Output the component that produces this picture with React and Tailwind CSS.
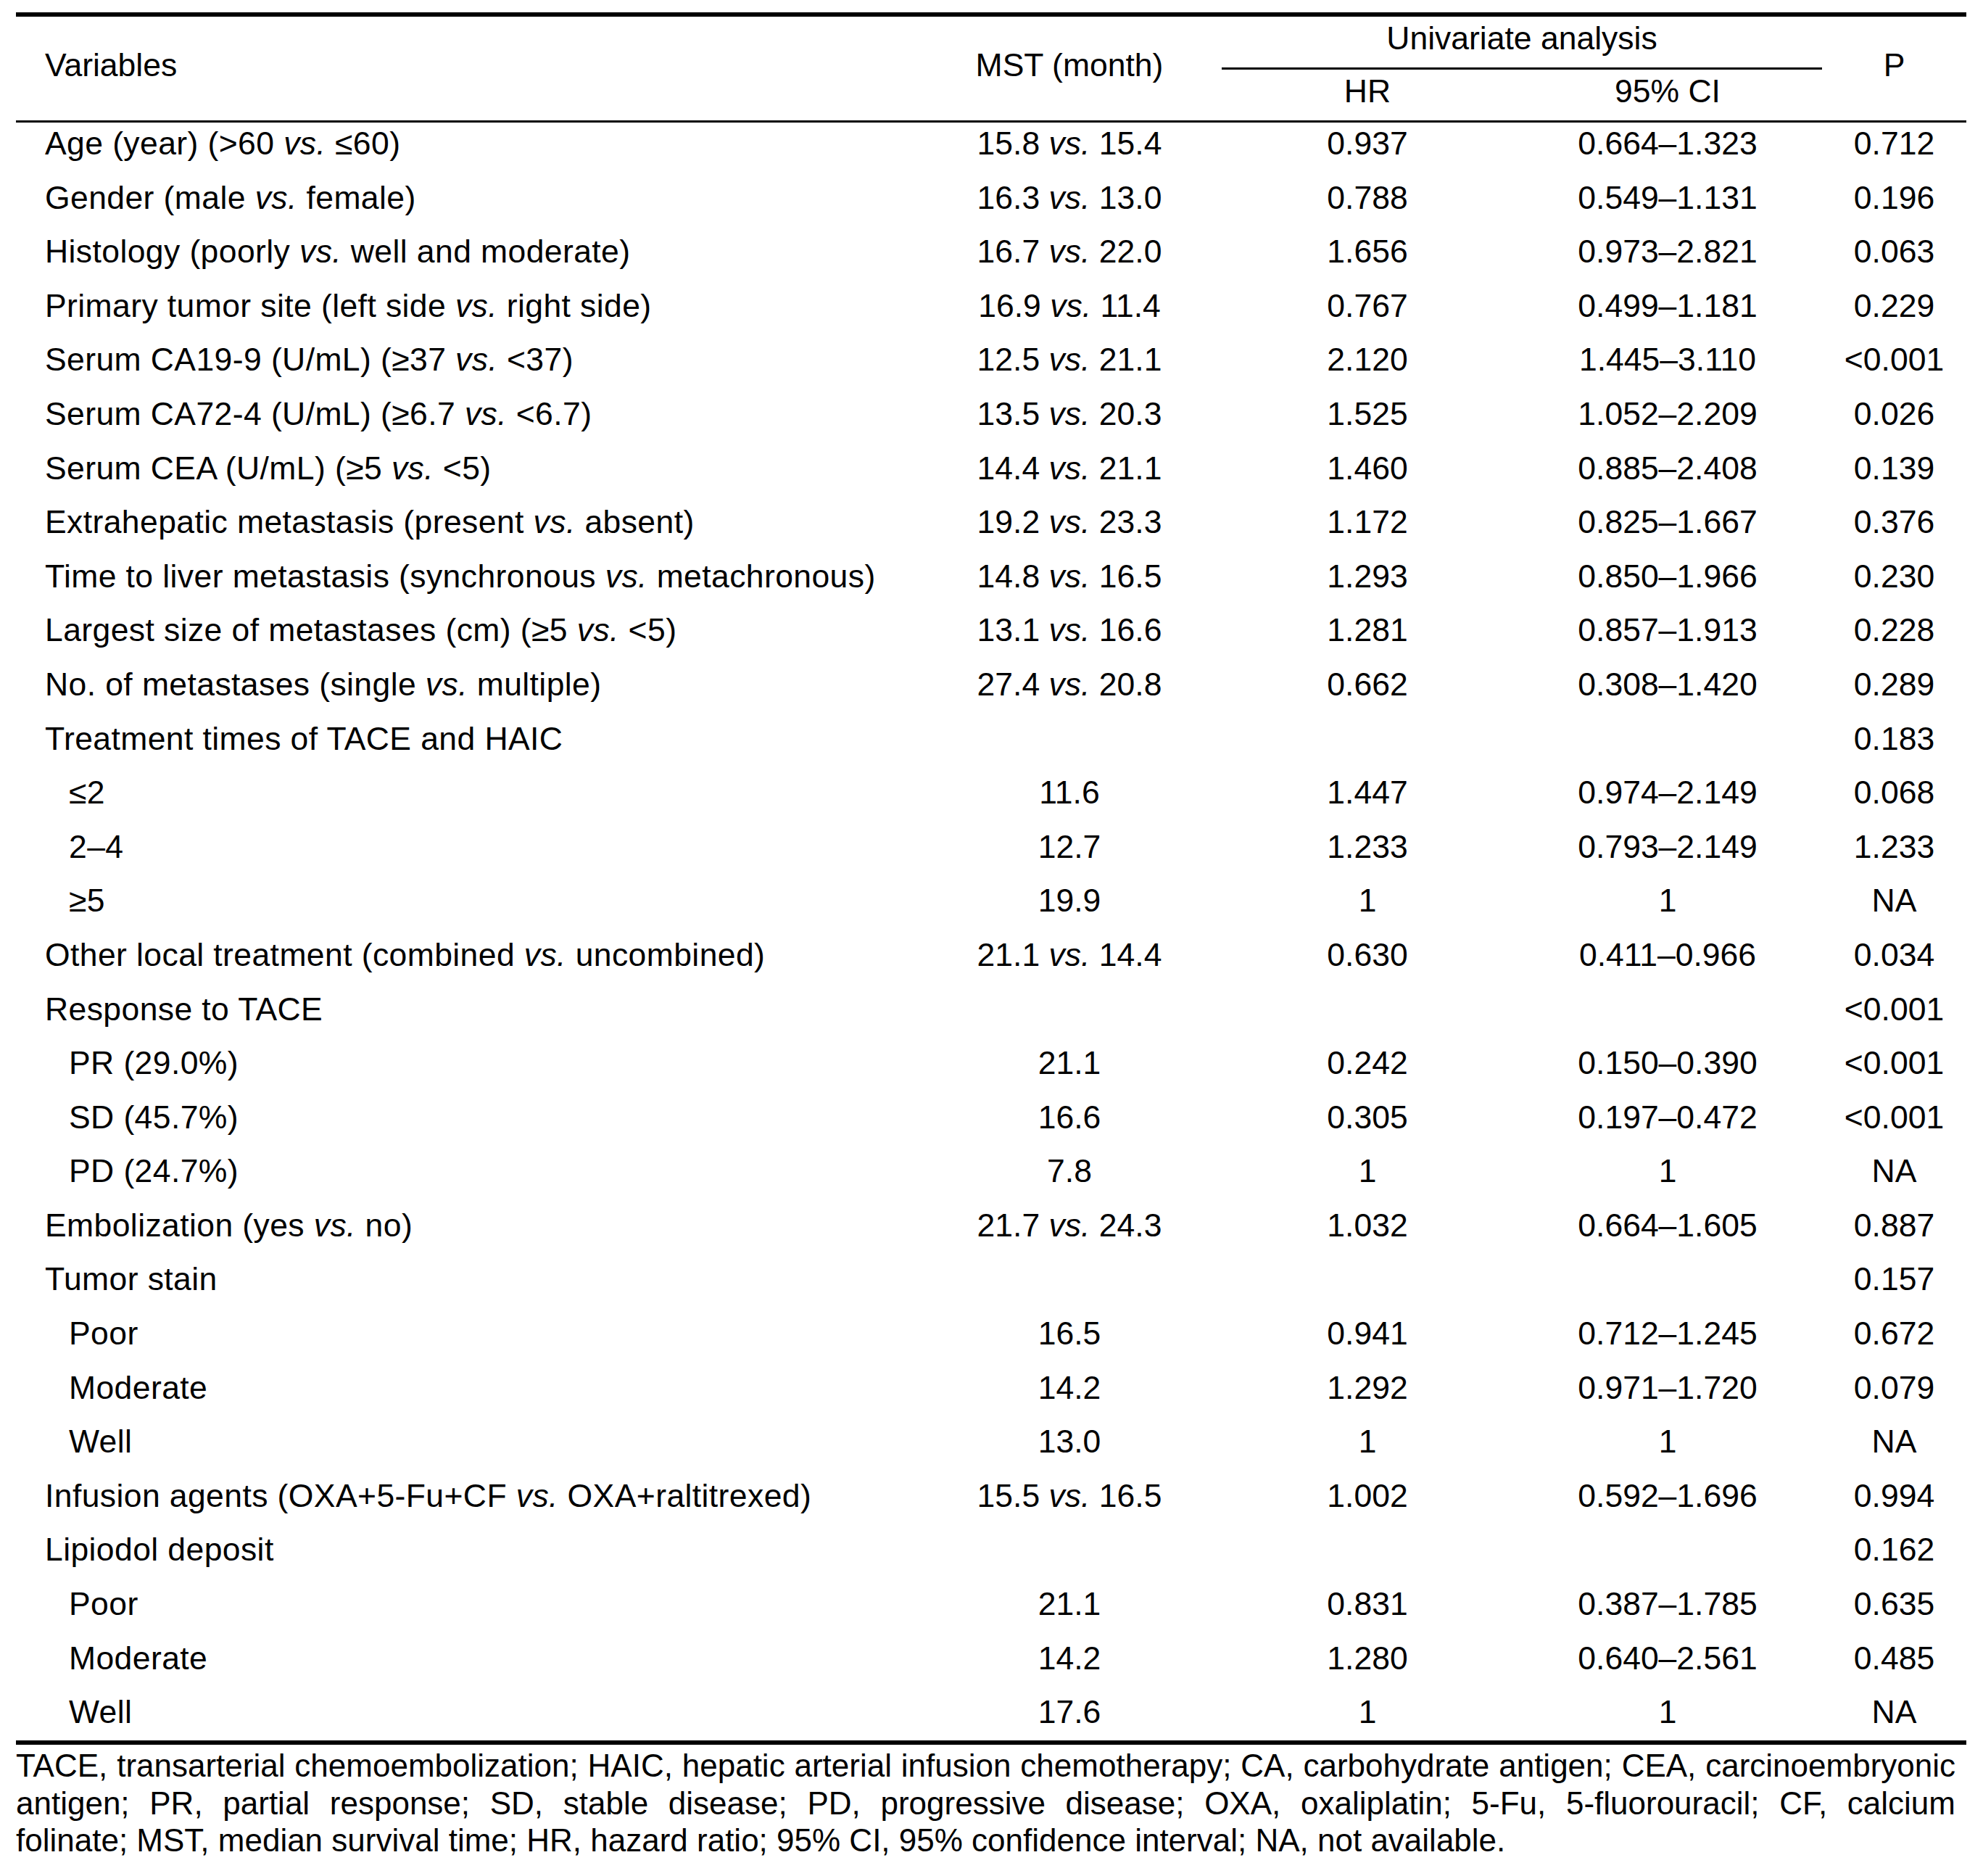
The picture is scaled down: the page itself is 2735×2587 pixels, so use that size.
const rows = [
  ["Age (year) (>60 vs. ≤60)", "15.8 vs. 15.4", "0.937", "0.664–1.323", "0.712"],
  ["Gender (male vs. female)", "16.3 vs. 13.0", "0.788", "0.549–1.131", "0.196"],
  ["Histology (poorly vs. well and moderate)", "16.7 vs. 22.0", "1.656", "0.973–2.821", "0.063"],
  ["Primary tumor site (left side vs. right side)", "16.9 vs. 11.4", "0.767", "0.499–1.181", "0.229"],
  ["Serum CA19-9 (U/mL) (≥37 vs. <37)", "12.5 vs. 21.1", "2.120", "1.445–3.110", "<0.001"],
  ["Serum CA72-4 (U/mL) (≥6.7 vs. <6.7)", "13.5 vs. 20.3", "1.525", "1.052–2.209", "0.026"],
  ["Serum CEA (U/mL) (≥5 vs. <5)", "14.4 vs. 21.1", "1.460", "0.885–2.408", "0.139"],
  ["Extrahepatic metastasis (present vs. absent)", "19.2 vs. 23.3", "1.172", "0.825–1.667", "0.376"],
  ["Time to liver metastasis (synchronous vs. metachronous)", "14.8 vs. 16.5", "1.293", "0.850–1.966", "0.230"],
  ["Largest size of metastases (cm) (≥5 vs. <5)", "13.1 vs. 16.6", "1.281", "0.857–1.913", "0.228"],
  ["No. of metastases (single vs. multiple)", "27.4 vs. 20.8", "0.662", "0.308–1.420", "0.289"],
  ["Treatment times of TACE and HAIC", "", "", "", "0.183"],
  ["≤2", "11.6", "1.447", "0.974–2.149", "0.068", true],
  ["2–4", "12.7", "1.233", "0.793–2.149", "1.233", true],
  ["≥5", "19.9", "1", "1", "NA", true],
  ["Other local treatment (combined vs. uncombined)", "21.1 vs. 14.4", "0.630", "0.411–0.966", "0.034"],
  ["Response to TACE", "", "", "", "<0.001"],
  ["PR (29.0%)", "21.1", "0.242", "0.150–0.390", "<0.001", true],
  ["SD (45.7%)", "16.6", "0.305", "0.197–0.472", "<0.001", true],
  ["PD (24.7%)", "7.8", "1", "1", "NA", true],
  ["Embolization (yes vs. no)", "21.7 vs. 24.3", "1.032", "0.664–1.605", "0.887"],
  ["Tumor stain", "", "", "", "0.157"],
  ["Poor", "16.5", "0.941", "0.712–1.245", "0.672", true],
  ["Moderate", "14.2", "1.292", "0.971–1.720", "0.079", true],
  ["Well", "13.0", "1", "1", "NA", true],
  ["Infusion agents (OXA+5-Fu+CF vs. OXA+raltitrexed)", "15.5 vs. 16.5", "1.002", "0.592–1.696", "0.994"],
  ["Lipiodol deposit", "", "", "", "0.162"],
  ["Poor", "21.1", "0.831", "0.387–1.785", "0.635", true],
  ["Moderate", "14.2", "1.280", "0.640–2.561", "0.485", true],
  ["Well", "17.6", "1", "1", "NA", true],
];

// put "vs." in italics, like the journal does
const Vs = ({ text }) => {
  const parts = text.split(" vs. ");
  if (parts.length === 1) return text;
  return (
    <>
      {parts[0]} <i>vs.</i> {parts[1]}
    </>
  );
};

export default function App() {
  return (
    <div
      className="bg-white text-black pt-[17px] pl-[22px] text-[44.5px] leading-[44px]"
      style={{ fontFamily: '"Liberation Sans", Arial, sans-serif' }}
    >
      <div className="w-[2690px]">
        {/* header */}
        <div className="flex border-t-[6px] border-b-[3px] border-black h-[152px]">
          <div className="w-[1243px] pl-[40px] pt-[45px]">Variables</div>
          <div className="w-[420px] text-center pt-[45px]">MST (month)</div>
          <div className="w-[828px] flex flex-col">
            <div className="h-[73px] border-b-[3px] border-black text-center pt-[8px]">Univariate analysis</div>
            <div className="flex pt-[8px]">
              <div className="w-[402px] text-center">HR</div>
              <div className="w-[426px] text-center">95% CI</div>
            </div>
          </div>
          <div className="w-[199px] text-center pt-[45px]">P</div>
        </div>

        {/* body */}
        <div className="border-b-[6px] border-black">
          {rows.map((r, i) => (
            <div key={i} className="flex h-[74.6px] last:h-[68px] pt-[7px]">
              <div className={`w-[1243px] whitespace-nowrap tracking-[0.4px] ${r[5] ? "pl-[73px]" : "pl-[40px]"}`}>
                <Vs text={r[0]} />
              </div>
              <div className="w-[420px] text-center whitespace-nowrap">
                <Vs text={r[1]} />
              </div>
              <div className="w-[402px] text-center">{r[2]}</div>
              <div className="w-[426px] text-center">{r[3]}</div>
              <div className="w-[199px] text-center">{r[4]}</div>
            </div>
          ))}
        </div>
      </div>

      {/* footnote */}
      <div className="w-[2675px] mt-[3px] text-[44px] leading-[51.5px] pb-[20px]">
        <div className="whitespace-nowrap text-justify [text-align-last:justify]">
          TACE, transarterial chemoembolization; HAIC, hepatic arterial infusion chemotherapy; CA, carbohydrate antigen; CEA, carcinoembryonic
        </div>
        <div className="whitespace-nowrap text-justify [text-align-last:justify]">
          antigen; PR, partial response; SD, stable disease; PD, progressive disease; OXA, oxaliplatin; 5-Fu, 5-fluorouracil; CF, calcium
        </div>
        <div className="whitespace-nowrap">
          folinate; MST, median survival time; HR, hazard ratio; 95% CI, 95% confidence interval; NA, not available.
        </div>
      </div>
    </div>
  );
}
